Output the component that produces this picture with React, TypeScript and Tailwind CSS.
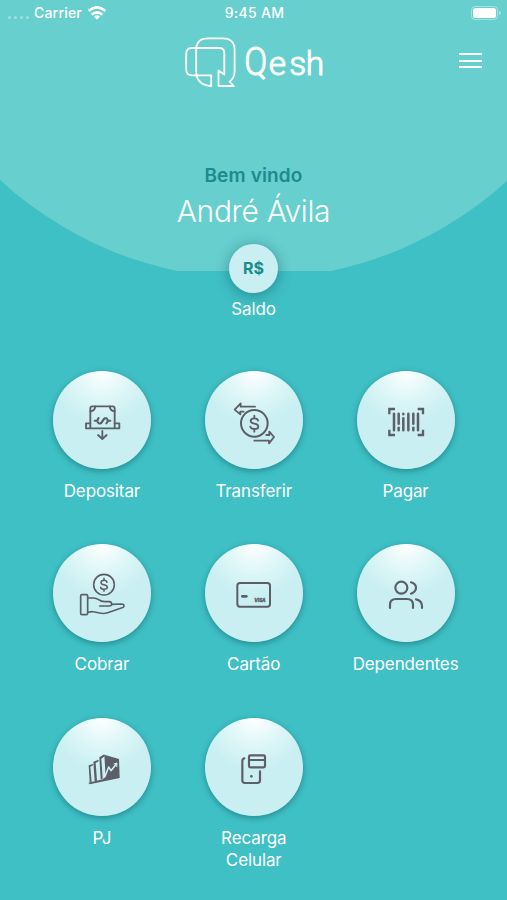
import React from 'react';

interface IconProps {
  box: string;
  children: React.ReactNode;
}

// Base for all menu icons, fills the whole round button
const Icon: React.FC<IconProps> = ({ box, children }) => (
  <svg
    viewBox={box}
    className="h-full w-full text-[#5c5e68]"
    fill="none"
    stroke="currentColor"
    strokeWidth="5.5"
    strokeLinecap="round"
    strokeLinejoin="round"
  >
    {children}
  </svg>
);

const DepositIcon = () => (
  <Icon box="39 31 294 294">
    <path d="M151 188V143Q151 137 157 137H218Q224 137 224 143V188" />
    <path d="M151 152Q164 151 166 137M224 152Q211 151 209 137" />
    <path d="M151 188H138V203H238V188H224M151 188V203M224 188V203" />
    <path d="M164 180H173M202 180H211M176 172Q168 181 176 188Q184 190 188 181Q192 171 200 173Q207 180 199 188" strokeWidth="6" />
    <path d="M182 188L194 173" strokeWidth="5" />
    <path d="M187 211V234M174 223L187 235L200 223" />
  </Icon>
);

const TransferIcon = () => (
  <Icon box="40 31 294 294">
    <circle cx="188" cy="188" r="40" strokeWidth="6" />
    <path d="M190 138H147V128L129 147L146 161V153H156" />
    <path d="M188 240H232V248L247 229L233 213V223H224" />
    <path d="M199 180Q198 173 188 173Q177 173 177 181Q177 187 188 189Q200 191 200 198Q200 205 188 205Q177 205 176 198M188 165V173M188 205V213" />
  </Icon>
);

const BarcodeIcon = () => (
  <Icon box="41 33 294 294">
    <g strokeLinecap="butt" strokeLinejoin="miter">
      <path d="M138 163V147H155M223 147H239V163M239 209V225H223M155 225H138V209" strokeWidth="7" />
    </g>
    <path d="M152 161V211M166 161V191M166 203V211M180 161V163M180 175V211M195 161V211M210 161V191M210 203V211M224 161V211" strokeWidth="7.5" />
  </Icon>
);

const ChargeIcon = () => (
  <Icon box="39 29 294 294">
    <circle cx="192" cy="151" r="31" strokeWidth="4.8" />
    <path d="M201 144Q200 138 192 138Q183 138 183 145Q183 150 192 151Q202 153 202 159Q202 165 192 165Q183 165 182 159M192 132V138M192 165V171" strokeWidth="4.5" />
    <rect x="122" y="181" width="21" height="60" rx="4" strokeWidth="5" />
    <path d="M143 191H161Q169 191 176 196Q183 202 194 202H208Q215 203 215 209Q215 215 208 215H179" strokeWidth="4.8" />
    <path d="M215 210L244 209Q252 209 252 214Q252 219 244 221L203 235Q191 239 179 236L160 232Q156 231 143 234" strokeWidth="4.8" />
  </Icon>
);

const CardIcon = () => (
  <Icon box="40 28 294 294">
    <rect x="137" y="145" width="98" height="71" rx="8" strokeWidth="6" />
    <path d="M152 185H164" strokeWidth="8" />
    <text
      x="188"
      y="203"
      textLength="34"
      className="font-[Inter,sans-serif] text-[14px] font-extrabold italic"
      fill="currentColor"
      stroke="currentColor"
      strokeWidth="1"
    >
      VISA
    </text>
  </Icon>
);

const PeopleIcon = () => (
  <Icon box="41 28 294 294">
    <circle cx="174" cy="159" r="18" strokeWidth="6.5" />
    <path d="M203 143Q218 148 218 159Q218 171 203 177" strokeWidth="6.5" />
    <path d="M140 220V210Q140 193 158 193H191Q209 193 209 210V220M218 194Q236 198 236 214V220" strokeWidth="6.5" />
  </Icon>
);

const ChartIcon = () => (
  <Icon box="39 38 294 294">
    <g fill="currentColor" stroke="none">
      <path d="M193 148L237 161L239 218L149 237L145 232L188 222L197 215Z" />
      <path d="M146 180L159 176V180L151 184L155 231H149Z" />
      <path d="M160 169L176 163V168L167 173L171 226L164 228Z" />
      <path d="M178 156L193 147L194 153L184 160L188 220L182 222Z" />
    </g>
    <path d="M196 211L206 185L213 196L229 176" stroke="#d5f2f4" strokeWidth="4.5" />
    <path d="M222 176L231 173L230 184" stroke="#d5f2f4" strokeWidth="3" />
  </Icon>
);

const RechargeIcon = () => (
  <Icon box="40 38 294 294">
    <path d="M158 159Q152 161 152 168V225Q152 233 160 233H197Q205 233 205 225V198" strokeWidth="6.5" />
    <rect x="172" y="150" width="48" height="36" rx="4" strokeWidth="6.5" />
    <path d="M172 164H220" />
    <circle cx="179" cy="213" r="4" fill="currentColor" stroke="none" />
  </Icon>
);

const menu = [
  { label: 'Depositar', icon: DepositIcon },
  { label: 'Transferir', icon: TransferIcon },
  { label: 'Pagar', icon: BarcodeIcon },
  { label: 'Cobrar', icon: ChargeIcon },
  { label: 'Cartão', icon: CardIcon },
  { label: 'Dependentes', icon: PeopleIcon },
  { label: 'PJ', icon: ChartIcon },
  { label: 'Recarga Celular', icon: RechargeIcon },
];

const StatusBar = () => (
  <div className="grid h-[26px] grid-cols-3 items-center pr-1.5 pl-2 text-[14px] font-medium">
    <div className="flex items-center">
      <div className="mt-2 mr-[5px] flex gap-[3px] opacity-35">
        <span className="h-[3px] w-[3px] rounded-full bg-white" />
        <span className="h-[3px] w-[3px] rounded-full bg-white" />
        <span className="h-[3px] w-[3px] rounded-full bg-white" />
        <span className="h-[3px] w-[3px] rounded-full bg-white" />
      </div>
      <span className="-mt-px tracking-[0.2px]">Carrier</span>
      <svg viewBox="0 0 54 42" className="ml-1.5 h-3.5 w-[18px]" fill="none" stroke="white" strokeWidth="8">
        <path d="M2 15Q27 -7 52 15M11 26Q27 12 43 26" />
        <path d="M18 32Q27 24 36 32L27 41Z" fill="white" stroke="none" />
      </svg>
    </div>
    <div className="-mt-px text-center tracking-[0.3px]">9:45 AM</div>
    <div className="flex items-center justify-end gap-px">
      <div className="h-[14px] w-[27px] rounded-[4px] border border-white/40 p-px">
        <div className="h-full w-full rounded-[2.5px] bg-white" />
      </div>
      <div className="h-1 w-[1.5px] rounded-r bg-white/40" />
    </div>
  </div>
);

const Logo = () => (
  <svg viewBox="1.2 -1 140 52" className="h-[52px] w-[140px] overflow-visible" fill="none" stroke="white" strokeWidth="1.8" strokeLinejoin="round">
    <path d="M28.4 39.3H9Q3.4 39.3 3.4 33.5V18Q3.4 12 9 12H36.5Q41.5 12 41.5 17V38.5L35.7 34.5V50H51L46.8 45.5Q51.8 42 51.8 35V14Q51.8 2.4 40 2.4H25Q13.4 2.4 13.4 14V35Q13.4 49 28.4 50Z" />
    <g fill="white" strokeWidth="1" className="font-[Roboto,sans-serif] font-light">
      <text y="39.3">
        <tspan x="61.5" fontSize="38" textLength="23" lengthAdjust="spacingAndGlyphs">Q</tspan>
        <tspan x="86 106.5 123" fontSize="33.5">esh</tspan>
      </text>
    </g>
  </svg>
);

const App: React.FC = () => {
  return (
    <div className="h-[900px] w-full overflow-hidden bg-[#3fc0c5] font-[Inter,sans-serif] text-white">
      {/* Header */}
      <header className="relative h-[270.5px] overflow-hidden">
        <div className="absolute -top-[471px] left-1/2 h-[750px] w-[750px] -translate-x-1/2 rounded-full bg-[#67cfce]" />
        <div className="relative">
          <StatusBar />
          <div className="grid grid-cols-[1fr_auto_1fr] items-start pt-[9px]">
            <div />
            <Logo />
            <button className="mt-[18px] mr-[25px] flex flex-col gap-[4.5px] justify-self-end" aria-label="Menu">
              <span className="h-[2px] w-[23px] bg-white" />
              <span className="h-[2px] w-[23px] bg-white" />
              <span className="h-[2px] w-[23px] bg-white" />
            </button>
          </div>
          <div className="pt-[75px] text-center">
            <p className="text-[19px] leading-7 font-semibold tracking-[0.15px] text-[#1b8b8d]">Bem vindo</p>
            <h1 className="mt-px text-[30px] leading-10 font-[350] tracking-[-0.35px]">André Ávila</h1>
          </div>
        </div>
      </header>

      {/* Balance */}
      <div className="relative -mt-[26.5px] flex flex-col items-center">
        <button className="flex h-[49px] w-[49px] items-center justify-center rounded-full bg-[#c9eff2] pb-px text-[16px] font-bold text-[#1b8b8d] shadow-[0_2px_14px_rgba(0,70,75,0.45)]">
          R$
        </button>
        <span className="mt-[5px] text-[17px] leading-[22px] tracking-[-0.1px]">Saldo</span>
      </div>

      {/* Menu */}
      <div className="mt-[50.5px] grid auto-rows-[173.5px] grid-cols-3 pr-[25.5px] pl-[26px]">
        {menu.map(({ label, icon: ItemIcon }) => (
          <div key={label} className="flex flex-col items-center">
            <button
              aria-label={label}
              className="h-[98px] w-[98px] shrink-0 rounded-full bg-[radial-gradient(circle_at_50%_0%,#ffffff_0%,#e0f7f8_24%,#c9eff2_48%)] shadow-[0_2px_6px_rgba(0,70,75,0.45)]"
            >
              <ItemIcon />
            </button>
            <span className="mt-[11px] w-[110px] text-center text-[17px] leading-[22px] tracking-[-0.12px]">{label}</span>
          </div>
        ))}
      </div>
    </div>
  );
};

export default App;
